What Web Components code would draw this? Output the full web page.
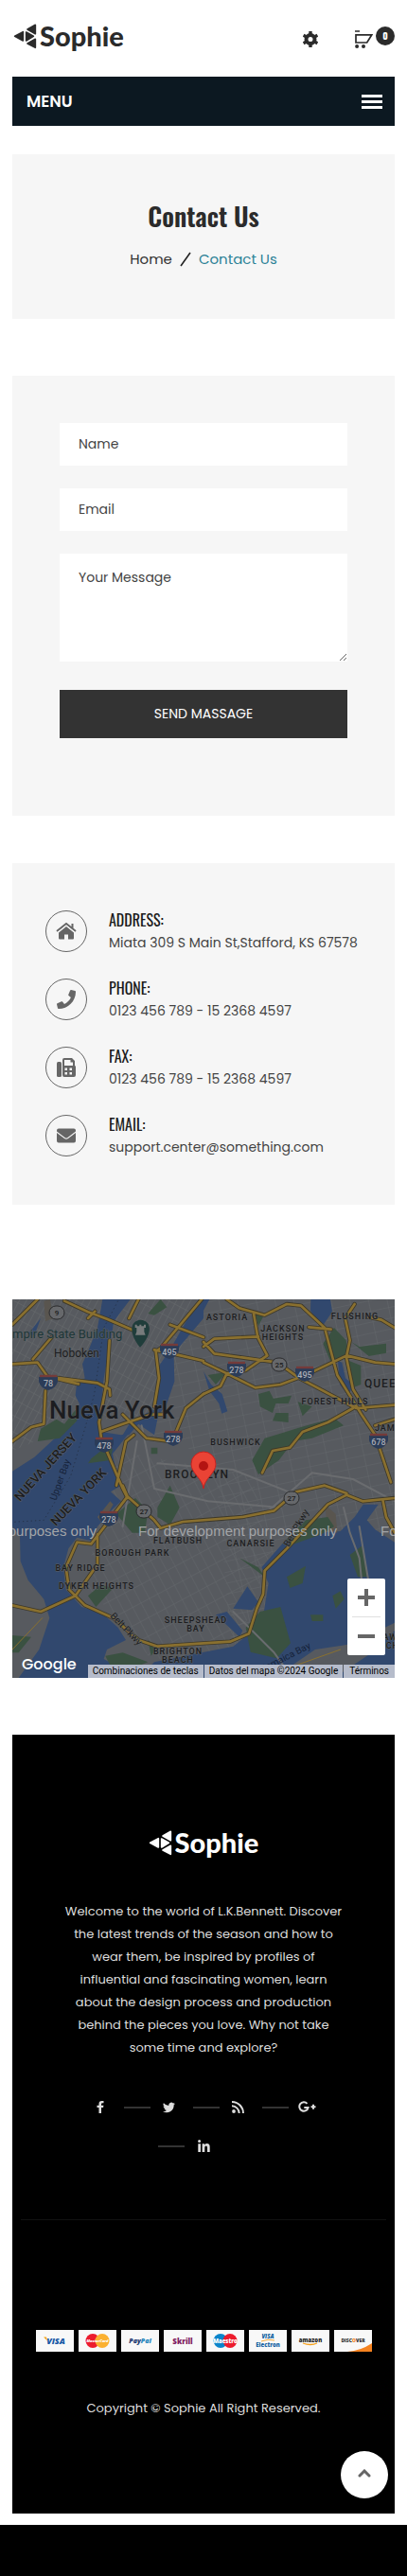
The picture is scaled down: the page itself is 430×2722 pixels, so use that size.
<!DOCTYPE html>
<html lang="en">
<head>
<meta charset="utf-8">
<meta name="viewport" content="width=device-width, initial-scale=1">
<title>Sophie - Contact Us</title>
<style>
  body { margin: 0; background: #fff; color: #333; font: 400 14px/21px Poppins, Inter, sans-serif; }
  main, site-header, menu-bar, site-footer { margin-left: 13px; margin-right: 13px; }
  main { display: flex; flex-direction: column; padding: 30px 0 60px; }
  contact-form { margin-top: 60px; }
  contact-info { margin-top: 50px; }
  city-map { margin-top: 100px; }
  .strip { height: 54px; margin-top: 12px; background: #000; }
</style>
</head>
<body>
<site-header></site-header>
<menu-bar>MENU</menu-bar>
<main>
  <page-banner><span slot="title">Contact Us</span><a slot="parent" href="#home">Home</a><span slot="current">Contact Us</span></page-banner>
  <contact-form></contact-form>
  <contact-info>
    <contact-item icon="home"><span slot="label">ADDRESS:</span>Miata 309 S Main St,Stafford, KS 67578</contact-item>
    <contact-item icon="phone"><span slot="label">PHONE:</span>0123 456 789 - 15 2368 4597</contact-item>
    <contact-item icon="fax"><span slot="label">FAX:</span>0123 456 789 - 15 2368 4597</contact-item>
    <contact-item icon="mail"><span slot="label">EMAIL:</span>support.center@something.com</contact-item>
  </contact-info>
  <city-map></city-map>
</main>
<site-footer></site-footer>
<div class="strip"></div>

<script>
function define(name, html, setup) {
  const template = document.createElement('template');
  template.innerHTML = html;
  customElements.define(name, class extends HTMLElement {
    constructor() {
      super();
      this.attachShadow({ mode: 'open' }).append(template.content.cloneNode(true));
    }
    connectedCallback() { if (setup) setup(this, this.shadowRoot); }
  });
}

define('sophie-logo', `
<style>
  :host { display: flex; align-items: flex-start; gap: 3px; color: #2b2b2b; }
  svg { width: 25px; height: 27px; margin-top: 5px; }
  span { font: 900 29px/36px Lato, sans-serif; }
</style>
<svg viewBox="0 0 75 81" fill="currentColor" stroke="currentColor" stroke-width="5" stroke-linejoin="round" aria-hidden="true">
  <path d="M5 40 31 26V54ZM41 27V54L64 40ZM45 18 70 4V32ZM45 63 70 49V76Z"/>
</svg><span>Sophie</span>`);

define('site-header', `
<style>
  :host { display: block; }
  header { display: flex; align-items: flex-start; justify-content: space-between; padding: 20px 0 25px 1px; }
  a { display: block; color: #2b2b2b; text-decoration: none; }
  nav { display: flex; align-items: flex-start; padding-top: 8px; }
  button { display: flex; padding: 0; border: 0; background: none; color: #2b2b2b; font: inherit; }
  .gear { margin: 5px 39px 0 0; }
  .cart { align-items: flex-start; gap: 3px; }
  .cart svg { margin-top: 4px; }
  .count { width: 20px; height: 20px; border-radius: 50%; background: #2b2b2b; color: #fff; font: 700 10px/20px Oswald, sans-serif; text-align: center; }
</style>
<header>
  <a href="#home" aria-label="Sophie"><sophie-logo></sophie-logo></a>
  <nav aria-label="Shop">
    <button class="gear" aria-label="Settings"><svg width="16" height="17" viewBox="0 0 16 17" fill="none" stroke="currentColor" aria-hidden="true"><circle cx="8" cy="8.5" r="4.5" stroke-width="4"/><path d="M8 0v3M8 14v3M.6 4.2l2.6 1.5M12.8 11.3l2.6 1.5M.6 12.8l2.6-1.5M12.8 5.7l2.6-1.5" stroke-width="3.4"/></svg></button>
    <button class="cart" aria-label="Cart, 0 items"><svg width="19" height="20" viewBox="0 0 19 20" fill="none" stroke="currentColor" stroke-width="1.7" aria-hidden="true"><path d="M0 1h5M1 4.8h16.8L12.7 13H1Z"/><g fill="currentColor" stroke="none"><circle cx="2.1" cy="17" r="2"/><circle cx="9" cy="17" r="2"/></g></svg><span class="count">0</span></button>
  </nav>
</header>`);

define('menu-bar', `
<style>
  :host { display: block; }
  nav { display: flex; align-items: center; justify-content: space-between; height: 52px; padding: 0 13px 0 15px; background: #0c1821; color: #fff; font-size: 17px; font-weight: 600; }
  button { display: flex; flex-direction: column; gap: 3px; width: 22px; padding: 0; border: 0; background: none; }
  i { width: 22px; height: 3px; background: #fff; }
</style>
<nav><span><slot></slot></span><button aria-label="Open menu"><i></i><i></i><i></i></button></nav>`);

define('page-banner', `
<style>
  :host { display: block; background: #f6f6f6; text-align: center; }
  section { padding: 45px 16px 51px; }
  h1 { margin: 0; color: #2b2b2b; font: 600 27px/40px Oswald, sans-serif; }
  .trail { display: flex; justify-content: center; align-items: center; gap: 8px; margin-top: 14px; font-size: 15px; line-height: 24px; }
  ::slotted(a) { color: #333; text-decoration: none; }
  ::slotted([slot=current]) { color: #2d8297; }
</style>
<section>
  <h1><slot name="title"></slot></h1>
  <nav class="trail" aria-label="Breadcrumb"><slot name="parent"></slot><svg width="12" height="16" viewBox="0 0 12 16" stroke="#222" stroke-width="1.6" aria-hidden="true"><path d="M1 15 11 1"/></svg><slot name="current"></slot></nav>
</section>`);

define('contact-form', `
<style>
  :host { display: block; background: #f6f6f6; }
  form { display: flex; flex-direction: column; gap: 24px; padding: 50px 50px 82px; }
  input, textarea { box-sizing: border-box; width: 100%; margin: 0; padding: 0 20px; border: 0; border-radius: 0; background: #fff; color: #444; font: inherit; display: block; }
  input { height: 45px; }
  textarea { height: 114px; padding: 15px 20px; resize: vertical; }
  ::placeholder { color: #444; opacity: 1; }
  button { height: 51px; margin-top: 6px; padding: 0; border: 0; background: #333; color: #fff; font: inherit; }
</style>
<form onsubmit="return false">
  <input type="text" placeholder="Name" aria-label="Name">
  <input type="email" placeholder="Email" aria-label="Email">
  <textarea placeholder="Your Message" aria-label="Your Message"></textarea>
  <button type="submit">SEND MASSAGE</button>
</form>`);

define('contact-info', `
<style>
  :host { display: block; background: #f6f6f6; }
  section { display: flex; flex-direction: column; gap: 28px; padding: 50px 30px 51px 35px; }
</style>
<section aria-label="Contact details"><slot></slot></section>`);

const icons = {
  home: '<svg width="22" height="18" viewBox="0 0 22 18"><path d="M3 10.5 11 4l8 6.500V16.500q0 1-1 1h-5v-5H9v5H4q-1 0-1-1Z" fill="#666"/><path d="M1 9 11 1l10 8M17.500 1v5" fill="none" stroke="#666" stroke-width="2"/><path d="M1 11 11 3l10 8" fill="none" stroke="#f6f6f6" stroke-width="1"/></svg>',
  phone: '<svg width="20" height="20" viewBox="0 0 512 512"><path fill="#666" d="M493.400 24.600l-104-24c-11.300-2.600-22.900 3.300-27.500 13.900l-48 112c-4.200 9.800-1.400 21.300 6.900 28l60.600 49.600c-36 76.700-98.900 140.500-177.200 177.200l-49.600-60.600c-6.800-8.300-18.200-11.100-28-6.900l-112 48C3.900 366.500-2 378.100.6 389.400l24 104C27.100 504.200 36.700 512 48 512c256.100 0 464-207.500 464-464 0-11.200-7.700-20.900-18.600-23.400z"/></svg>',
  fax: '<svg width="20" height="20" viewBox="0 0 20 20" fill="#666"><rect y="4" width="5" height="16" rx="1.500"/><path fill-rule="evenodd" d="M6 2q0-2 2-2h8l3 3v5q1 0 1 1.500V18q0 2-2 2H8q-2 0-2-2ZM8 2v6h9V4.500h-2.500V2ZM8.500 10.500v2.500H11v-2.500ZM13.500 10.500v2.500H16v-2.500ZM8.500 15v2.500H11V15ZM13.500 15v2.500H16V15Z"/></svg>',
  mail: '<svg width="20" height="16" viewBox="0 0 20 16" fill="#666"><path d="M0 2.500Q0 .5 2 .5h16q2 0 2 2V3.500l-8.500 6.500q-1.500 1-3 0L0 3.500ZM0 5l8 6q2 1.500 4 0l8-6v8.500q0 2-2 2H2q-2 0-2-2Z"/></svg>'
};
define('contact-item', `
<style>
  :host { display: block; }
  article { display: flex; align-items: flex-start; gap: 23px; }
  .icon { box-sizing: border-box; flex: none; display: flex; align-items: center; justify-content: center; width: 44px; height: 44px; border: 1px solid #666; border-radius: 50%; }
  .text { min-width: 0; margin: -2px 0; color: #444; line-height: 24px; }
  h2 { margin: 0; color: #1b1b1b; font: 400 16px/24px Oswald, sans-serif; }
</style>
<article><span class="icon" aria-hidden="true"></span><div class="text"><h2><slot name="label"></slot></h2><slot></slot></div></article>`,
(host, root) => { root.querySelector('.icon').innerHTML = icons[host.getAttribute('icon')]; });

const shield = (x, y, n) => `<path d="M${x - 10} ${y - 6}Q${x} ${y - 9} ${x + 10} ${y - 6}V${y - 1}Q${x + 8} ${y + 6} ${x} ${y + 8}Q${x - 8} ${y + 6} ${x - 10} ${y - 1}Z" fill="#2b3c58"/><path d="M${x - 9} ${y - 7}H${x + 9}" stroke="#743b3a" stroke-width="2.400"/><text class="num" x="${x}" y="${y + 4}">${n}</text>`;
const route = (x, y, n) => `<rect x="${x - 8}" y="${y - 7}" width="16" height="14" rx="7" fill="#66686b" stroke="#2a2b2d"/><text class="rt" x="${x}" y="${y + 3}">${n}</text>`;

define('city-map', `
<style>
  :host { display: block; position: relative; height: 400px; overflow: hidden; background: #575a5f; }
  .art { display: block; width: 100%; height: 100%; }
  text { font-family: Roboto, sans-serif; fill: #1c1d20; paint-order: stroke; stroke: #5d6064; stroke-width: 1; }
  .area text { font-size: 9px; font-weight: 500; letter-spacing: 1px; text-anchor: middle; }
  text.num { font-size: 9px; font-weight: 500; fill: #a9adb5; stroke: none; text-anchor: middle; }
  text.rt { font-size: 8px; font-weight: 500; stroke: none; text-anchor: middle; }
  text.mark { font: 400 15px "Liberation Sans", sans-serif; fill: #a3a5a8; stroke: none; }
  .zoom { position: absolute; right: 10px; bottom: 24px; width: 40px; display: flex; flex-direction: column; background: #fff; border-radius: 2px; }
  .zoom button { display: flex; align-items: center; justify-content: center; height: 40px; padding: 0; border: 0; background: none; }
  .zoom hr { width: 30px; height: 1px; margin: 0 auto; border: 0; background: #e0e0e0; }
  .legal { position: absolute; right: 0; bottom: 0; display: flex; gap: 1px; font: 400 10px/14px Roboto, sans-serif; }
  .legal > * { padding: 0 5px; border: 0; background: #b6bccb; color: #000; font: inherit; text-decoration: none; white-space: nowrap; }
  .legal > a { padding: 0 6px; }
  .google { position: absolute; left: 10px; bottom: 3px; color: #fff; font: 500 16px/22px Poppins, sans-serif; }
</style>
<svg class="art" viewBox="0 0 404 400" preserveAspectRatio="xMidYMid slice" role="img" aria-label="Map of New York">
  <defs>
    <pattern id="g1" width="20" height="46" patternUnits="userSpaceOnUse" patternTransform="rotate(28)"><path d="M0 0H20M0 0V46" stroke="#686b6e" stroke-width="3" fill="none"/></pattern>
    <pattern id="g2" width="58" height="34" patternUnits="userSpaceOnUse" patternTransform="rotate(-12)"><path d="M0 0H58M0 0V34" stroke="#64676b" stroke-width="3" fill="none"/></pattern>
    <pattern id="g3" width="52" height="30" patternUnits="userSpaceOnUse" patternTransform="rotate(62)"><path d="M0 0H52M0 0V30" stroke="#64676b" stroke-width="3" fill="none"/></pattern>
    <g id="roads">
      <path d="M0 205 80 200 112 245 270 265 308 285 310 305M112 245 210 268M165 5 240 40 300 62 400 105M240 60 262 38M125 120 65 190M370 60 400 0M308 130 300 260 275 390 282 440 350 600 365 630M0 450 60 405 100 395 105 290M0 80 80 0M600 0 470 155 455 165 465 250 450 340M280 420 350 395 440 365 480 365M350 365 425 440 500 450 515 430 550 345 606 300M450 160 520 175 606 195M500 80 606 120M330 590 345 520 360 450 385 430"/>
      <path d="M680 0 720 28 800 50 870 15 915 20 990 90 1030 240 1110 370 1150 430 1200 580M765 45 778 120 808 178 740 225 680 235 606 200M606 135 640 172 840 200 910 250 1090 345 1212 335M606 150 640 125 780 118M680 235 660 275 606 300M680 235 770 280 850 270 930 240 1060 178 1150 200 1212 205M1060 178 1070 130 1055 60 1085 15M940 88 1010 95M1125 55 1170 65 1212 90M792 550 825 480 880 470 920 420 1000 390 1080 345M1058 180 1080 285 1120 350"/>
      <path d="M350 590 365 625 250 775 205 770 170 850 180 920 230 970 320 1010 400 1080 460 1100 606 1090 690 1085 750 1060 775 980 795 935 800 860 870 790 1000 650 1060 620 1110 640 1212 630M365 625 450 700 470 725 540 705 730 690 830 670 900 610 990 590 1060 615M270 745 270 840 200 940 90 990 0 970M1175 640 1185 690 1212 740M1150 400 1212 380"/>
    </g>
  </defs>
  <g transform="scale(.33333)" stroke-linejoin="round" stroke-linecap="round">
    <path d="M0 0H1212V1200H0Z" fill="#575a5f"/>
    <path d="M0 0H290L200 400 0 480ZM300 0H600L460 380H280Z" fill="url(#g1)"/>
    <path d="M600 0H1212V720L700 1160 640 500 400 420Z" fill="url(#g2)"/>
    <path d="M330 480 760 560 820 800 700 1140H440L230 900Z" fill="url(#g3)"/>
    <g fill="#31486e">
      <path d="M286 0H374L345 38 322 70 305 170 290 250 276 390 282 420 345 430 368 426 340 462 318 490 332 560 345 590 312 610 345 640 318 665 270 720 248 765 205 755 178 790 162 850 170 920 220 975 285 995 335 1040 360 1080 300 1110 290 1140 360 1180 420 1200H20L85 1110 118 1010 100 950 50 890 26 830 24 750 0 720V545L70 500 130 445 200 390 212 330 200 305 204 268 230 250 222 205 240 165 270 90Z"/>
      <path d="M590 0H606V60L530 150 512 180 514 260 490 330 462 370 450 430 400 395 370 430 350 430 380 380 450 350 460 290 462 215 500 160Z"/>
      <path d="M946 0H1008L1014 40 985 82 958 58 945 35ZM1032 195 1045 200 1056 250 1080 270 1066 305 1038 270ZM606 228 630 270 665 300 682 355 664 362 655 330 625 290Z"/>
      <path d="M860 770 900 745 1040 735 1085 690 1112 650 1160 650 1124 700 1150 730 1212 770V1025L1150 1055 1060 1095 980 1120 900 1160 840 1200H400L450 1150 600 1120 700 1100 770 1045 796 1000 812 900 790 850Z"/>
      <path d="M700 980 745 910 780 960 760 985ZM645 1000 680 990 730 1050 720 1070ZM1140 1120 1212 1050V1200H1020Z"/>
      <path d="M90 60 50 110 70 115ZM606 0H625L606 35Z"/>
    </g>
    <g fill="#59554f"><path d="M100 5 120 0 130 60 105 70ZM990 650 1025 680 1030 740 1000 730ZM270 690 310 640 320 650 285 710Z"/></g>
    <g fill="#3a5141">
      <path d="M140 380 165 395 200 350 205 385 150 440 80 450 90 410ZM250 505 300 465 318 475 310 510 240 520ZM430 45 470 0 490 25 450 50ZM0 1065 60 1070 20 1120 0 1120ZM330 680 390 630 430 670 420 740 380 740ZM460 660 500 590 530 660 500 715 460 690ZM240 940 280 905 320 915 265 975ZM430 1080 460 1100 440 1130ZM440 470H460V490H440Z"/>
      <path d="M770 45H800L780 85ZM985 140 1020 90 1058 130 1065 180 1010 200ZM1055 190 1105 210V270L1080 280ZM1075 135 1100 150 1185 140V170L1130 180ZM620 240 680 230 645 270ZM780 300 815 290 835 330 825 360 785 340ZM825 315 885 305 875 330 830 330ZM905 325 950 340 920 370ZM835 360 875 360V390L825 385ZM760 510 800 440 850 425 915 405 970 390 1020 375 1050 400 950 440 890 450 845 510 780 555Z"/>
      <path d="M785 990 850 975 882 1090 838 1138 755 1118 740 1040ZM870 880 930 845 920 900 880 915ZM1015 940 1040 925 1052 950 1025 980ZM1070 810 1110 780 1125 880 1095 880ZM945 1000 985 1000 985 1020 950 1020ZM1080 950 1110 940 1105 970 1080 980ZM720 820 780 850 800 880ZM870 760 930 700 1000 690 1020 720 980 745 880 780Z"/>
      <path d="M430 1150 350 1120 295 1130 310 1160 380 1170Z"/>
    </g>
    <path d="M880 1165 960 1110 1060 1095 1150 1055 1120 1090 960 1160 900 1190Z" fill="#575a5f"/>
    <g fill="none" stroke="#6a6c6f" stroke-width="6"><path d="M1050 660 1070 740 1100 820 1110 920M700 990 830 1120 880 1190M395 450 350 720M1100 720 1130 900M410 400 450 600 620 640 850 660M460 520 700 540 900 620M1212 640 1080 570 950 550 800 680"/></g>
    <path d="M335 5 290 90 260 300 230 410 185 560 100 700 0 706" fill="none" stroke="#263349" stroke-width="3" stroke-dasharray="4 9" stroke-linecap="butt"/>
    <use href="#roads" fill="none" stroke="#3d3829" stroke-width="13"/>
    <use href="#roads" fill="none" stroke="#8a702f" stroke-width="8"/>
    <path d="M0 1110 95 1010M900 1160 1040 1110" fill="none" stroke="#8a702f" stroke-width="3"/>
    <path d="M405 152C370 110 370 68 407 65 444 68 444 110 405 152Z" fill="#203d3b"/>
    <path d="M390 113h32l-4-10V90h5V80h-6v5h-8v-5h-6v5h-8v-5h-6v10h5v13Z" fill="#777b7c"/>
  </g>
  ${shield(38, 88, '78')}${shield(97, 154, '478')}${shield(170, 147, '278')}${shield(166, 55, '495')}${shield(237, 74, '278')}${shield(309, 79, '495')}${shield(387, 150, '678')}${shield(102, 232, '278')}
  ${route(47, 14, '9')}${route(282, 69, '25')}${route(139, 224, '27')}${route(295, 210, '27')}
  <text x="0" y="41" font-size="13" style="fill:#1d3738">mpire State Building</text>
  <text x="44" y="61" font-size="12">Hoboken</text>
  <text x="39" y="126" font-size="26" font-weight="500">Nueva York</text>
  <text x="372" y="93" font-size="12" font-weight="500" letter-spacing="1">QUEENS</text>
  <g class="area">
    <text x="227" y="22">ASTORIA</text><text x="286" y="34">JACKSON</text><text x="286" y="43">HEIGHTS</text>
    <text x="362" y="21">FLUSHING</text><text x="341" y="111">FOREST HILLS</text><text x="406" y="139">JAMAICA</text>
    <text x="236" y="154">BUSHWICK</text><text x="175" y="258">FLATBUSH</text><text x="127" y="271">BOROUGH PARK</text>
    <text x="72" y="287">BAY RIDGE</text><text x="89" y="306">DYKER HEIGHTS</text><text x="252" y="261">CANARSIE</text>
    <text x="194" y="342">SHEEPSHEAD</text><text x="194" y="351">BAY</text><text x="175" y="375">BRIGHTON</text><text x="175" y="384">BEACH</text>
    <text x="392" y="360">ROCKAWAY</text><text x="392" y="369">BEACH</text>
  </g>
  <text x="161" y="189" font-size="12" font-weight="500" letter-spacing="1">BROOKLYN</text>
  <g font-size="13" font-weight="500"><text transform="translate(8 214) rotate(-48)">NUEVA JERSEY</text><text transform="translate(46 240) rotate(-46)">NUEVA YORK</text></g>
  <g font-size="10"><text transform="translate(46 213) rotate(-70)" style="fill:#16233a;stroke:none">Upper Bay</text><text transform="translate(103 335) rotate(46)">Belt Pkwy</text><text transform="translate(292 262) rotate(-60)">Belt Pkwy</text><text transform="translate(265 394) rotate(-27)" style="fill:#16233a;stroke:none">Jamaica Bay</text></g>
  <text class="mark" x="-121" y="250">For development purposes only</text>
  <text class="mark" x="133" y="250">For development purposes only</text>
  <text class="mark" x="389" y="250">For development purposes only</text>
  <path d="M202 200C201 189 189 184 189 174A13 13 0 0 1 215 174C215 184 203 189 202 200Z" fill="#ea4335" stroke="#c5221f" stroke-width="1"/><circle cx="202" cy="176" r="5" fill="#b31412"/>
</svg>
<span class="google">Google</span>
<div class="zoom"><button aria-label="Zoom in"><svg width="18" height="18"><path d="M0 9H18M9 0V18" stroke="#666" stroke-width="4"/></svg></button><hr><button aria-label="Zoom out"><svg width="18" height="18"><path d="M0 9H18" stroke="#666" stroke-width="4"/></svg></button></div>
<div class="legal"><button>Combinaciones de teclas</button><span>Datos del mapa ©2024 Google</span><a href="#terms">Términos</a></div>`);

define('payment-cards', `
<style>
  :host { display: block; }
  ul { display: flex; justify-content: center; gap: 5px; margin: 0; padding: 0; list-style: none; }
  li { display: flex; width: 40px; height: 23px; background: #f8f8f8; }
  svg { width: 40px; height: 23px; }
  text { font-family: "Open Sans", sans-serif; font-weight: 800; text-anchor: middle; }
</style>
<ul>
  <li><svg viewBox="0 0 40 23"><text x="21" y="15" font-size="9" font-style="italic" fill="#1557a5">VISA</text><path d="M8 7.500h3l1 4Z" fill="#f2a51e"/></svg></li>
  <li><svg viewBox="0 0 40 23"><circle cx="15" cy="11.500" r="7.500" fill="#ec1c2e"/><circle cx="25" cy="11.500" r="7.500" fill="#fbb131"/><text x="20" y="13" font-size="4" font-style="italic" fill="#fff">MasterCard</text></svg></li>
  <li><svg viewBox="0 0 40 23"><text x="20" y="14" font-size="7" font-style="italic" fill="#213a70">Pay<tspan fill="#2585bd">Pal</tspan></text></svg></li>
  <li><svg viewBox="0 0 40 23"><text x="20" y="15" font-size="8" fill="#811a62">Skrill</text></svg></li>
  <li><svg viewBox="0 0 40 23"><circle cx="15" cy="11.500" r="7.500" fill="#0b85cb"/><circle cx="25" cy="11.500" r="7.500" fill="#ed1c2e"/><text x="20" y="14" font-size="6" fill="#fff">Maestro</text></svg></li>
  <li><svg viewBox="0 0 40 23"><text x="20" y="9" font-size="6" font-style="italic" fill="#0d5f9f">VISA</text><path d="M13 12q7-3 14-1" stroke="#f4ab3c" fill="none"/><text x="20" y="18" font-size="6" fill="#1b66a5">Electron</text></svg></li>
  <li><svg viewBox="0 0 40 23"><text x="20" y="13" font-size="6" fill="#222">amazon</text><path d="M12 14q8 3 15 0" stroke="#f6a11c" stroke-width="1.300" fill="none"/></svg></li>
  <li><svg viewBox="0 0 40 23"><path d="M14 23Q28 22 40 14V23Z" fill="#f5821f"/><text x="20" y="13" font-size="5" fill="#333">DISC<tspan fill="#f5821f">O</tspan>VER</text></svg></li>
</ul>`);

define('site-footer', `
<style>
  :host { display: block; position: relative; background: #000; color: #ddd; text-align: center; }
  footer { padding: 96px 9px 99px; }
  sophie-logo { color: #fff; }
  .brand { display: flex; flex-direction: column; align-items: center; padding: 0 41px 57px; border-bottom: 1px solid #111; }
  p { margin: 0; font-size: 13px; line-height: 24px; }
  .about { max-width: 300px; margin-top: 43px; }
  ul { display: flex; flex-wrap: wrap; justify-content: center; column-gap: 5px; max-width: 304px; margin: 30px 0 0; padding: 0; list-style: none; }
  li { display: flex; align-items: center; height: 41px; }
  li + li::before { content: ""; width: 28px; height: 2px; background: #333; }
  li:last-child { margin-right: 28px; }
  li a { display: flex; align-items: center; justify-content: center; width: 40px; height: 40px; }
  li svg { display: block; fill: #ddd; }
  payment-cards { margin: 116px 0 48px; }
  .top { position: absolute; right: 7px; bottom: 16px; display: flex; align-items: center; justify-content: center; width: 50px; height: 50px; padding: 0 0 4px; border: 0; border-radius: 50%; background: #fff; }
</style>
<footer>
  <div class="brand">
    <sophie-logo></sophie-logo>
    <p class="about">Welcome to the world of L.K.Bennett. Discover the latest trends of the season and how to wear them, be inspired by profiles of influential and fascinating women, learn about the design process and production behind the pieces you love. Why not take some time and explore?</p>
    <ul>
      <li><a href="#facebook" aria-label="Facebook"><svg width="8" height="13" viewBox="0 0 8 13"><path d="M7.500.1V2.200H6.200Q5 2.200 5 3.300V4.700H7.400L7.100 7H5v6H2.500V7H.5V4.700h2V3Q2.500 0 5.500 0 6.700 0 7.500.1Z"/></svg></a></li>
      <li><a href="#twitter" aria-label="Twitter"><svg width="13" height="12" viewBox="0 0 24 20"><path d="M24 2.500a10 10 0 0 1-2.800.8A5 5 0 0 0 23.300.5a10 10 0 0 1-3.100 1.200A4.900 4.900 0 0 0 11.800 6.200 14 14 0 0 1 1.700 1 4.900 4.900 0 0 0 3.200 7.600 4.900 4.900 0 0 1 1 7a4.900 4.900 0 0 0 3.900 4.900 5 5 0 0 1-2.200.1 4.900 4.900 0 0 0 4.600 3.400A9.900 9.900 0 0 1 0 17.500 14 14 0 0 0 21.500 5a10 10 0 0 0 2.500-2.500Z"/></svg></a></li>
      <li><a href="#feed" aria-label="RSS"><svg width="13" height="13" viewBox="0 0 13 13"><circle cx="2" cy="11" r="1.900"/><path d="M0 5.300A7.700 7.700 0 0 1 7.700 13M0 1A12 12 0 0 1 12 13" fill="none" stroke="#ddd" stroke-width="1.900"/></svg></a></li>
      <li><a href="#google-plus" aria-label="Google plus"><svg width="19" height="13" viewBox="0 0 19 13"><path d="M9.500 2.800A4.700 4.700 0 1 0 10.600 7H6.300M13.500 6.200h5M16 3.700v5" fill="none" stroke="#ddd" stroke-width="2"/></svg></a></li>
      <li><a href="#linkedin" aria-label="LinkedIn"><svg width="13" height="13" viewBox="0 0 13 13"><path d="M.3 4.300H3V13H.3ZM4.600 4.300H7.200V5.500Q8 4.100 9.800 4.100 12.700 4.100 12.700 7.700V13H10V8.200Q10 6.400 8.700 6.400 7.300 6.400 7.300 8.200V13H4.600Z"/><circle cx="1.600" cy="1.600" r="1.500"/></svg></a></li>
    </ul>
  </div>
  <payment-cards></payment-cards>
  <p>Copyright © Sophie All Right Reserved.</p>
</footer>
<button class="top" aria-label="Back to top"><svg width="14" height="9" viewBox="0 0 14 9"><path d="M2 7 7 2 12 7" fill="none" stroke="#666" stroke-width="3" stroke-linecap="round"/></svg></button>`);
</script>
</body>
</html>
